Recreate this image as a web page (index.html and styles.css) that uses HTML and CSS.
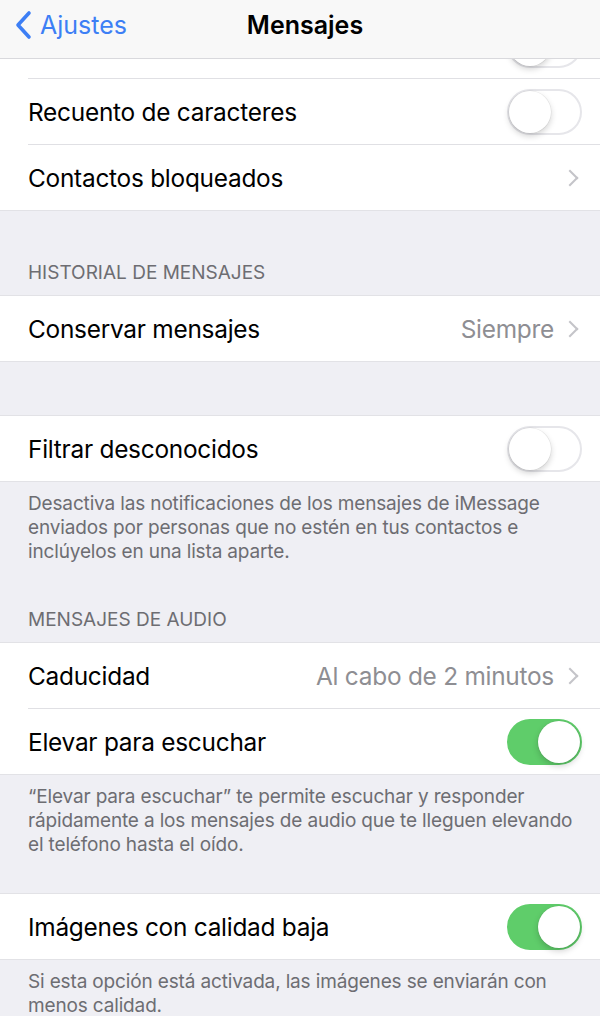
FILE: index.html
```html
<!DOCTYPE html>
<html lang="es">
<head>
<meta charset="utf-8">
<title>Mensajes</title>
<link rel="stylesheet" href="styles.css">
</head>
<body>
<header class="nav">
  <a class="back">
    <svg class="back-chev" width="20" height="30" viewBox="0 0 20 30"><polyline points="15,3 4,15 15,27" fill="none" stroke="#3d7ff5" stroke-width="3.6" stroke-linecap="round" stroke-linejoin="round"/></svg>
    <span>Ajustes</span>
  </a>
  <h1 class="title">Mensajes</h1>
  <span class="nav-end"></span>
</header>

<main class="page">
  <section class="group">
    <div class="row clipped"><span class="label"></span><span class="toggle"></span></div>
    <div class="row"><span class="label">Recuento de caracteres</span><span class="toggle"></span></div>
    <div class="row"><span class="label">Contactos bloqueados</span><span class="chev"></span></div>
  </section>

  <h2 class="header h-first">HISTORIAL DE MENSAJES</h2>
  <section class="group">
    <div class="row"><span class="label">Conservar mensajes</span><span class="value">Siempre</span><span class="chev"></span></div>
  </section>

  <div class="spacer"></div>
  <section class="group">
    <div class="row"><span class="label">Filtrar desconocidos</span><span class="toggle"></span></div>
  </section>
  <p class="footer">Desactiva las notificaciones de los mensajes de iMessage enviados por personas que no estén en tus contactos e inclúyelos en una lista aparte.</p>

  <h2 class="header h-after">MENSAJES DE AUDIO</h2>
  <section class="group">
    <div class="row"><span class="label">Caducidad</span><span class="value">Al cabo de 2 minutos</span><span class="chev"></span></div>
    <div class="row"><span class="label">Elevar para escuchar</span><span class="toggle on"></span></div>
  </section>
  <p class="footer">“Elevar para escuchar” te permite escuchar y responder rápidamente a los mensajes de audio que te lleguen elevando el teléfono hasta el oído.</p>

  <div class="spacer2"></div>
  <section class="group">
    <div class="row"><span class="label">Imágenes con calidad baja</span><span class="toggle on"></span></div>
  </section>
  <p class="footer">Si esta opción está activada, las imágenes se enviarán con menos calidad.</p>
</main>
</body>
</html>
```

FILE: styles.css
```css
* { box-sizing: border-box; }
html, body {
  margin: 0;
  padding: 0;
  background: #efeff4;
  font-family: "Inter", "Liberation Sans", sans-serif;
  -webkit-font-smoothing: antialiased;
}
body { width: 600px; height: 1016px; overflow: hidden; }

.nav {
  height: 59px;
  background: #f8f8f8;
  border-bottom: 1px solid #d9d9dd;
  display: grid;
  grid-template-columns: 1fr auto 1fr;
  align-items: start;
  padding-top: 9px;
}
.back {
  display: flex;
  align-items: center;
  gap: 6px;
  padding-left: 14px;
  color: #3d7ff5;
  font-size: 25px;
  line-height: 32px;
}
.back-chev { display: block; }
.title {
  margin: 0;
  font-size: 25px;
  font-weight: 600;
  color: #000;
  line-height: 32px;
  padding-left: 10px;
}

.group {
  background: #fff;
  border-top: 1px solid #e2e2e6;
  border-bottom: 1px solid #e2e2e6;
  margin: 0;
}
.group:first-child { border-top: none; }
.row {
  height: 66px;
  margin-left: 28px;
  padding-right: 18px;
  display: flex;
  align-items: center;
  border-bottom: 1px solid #e0e0e4;
}
.row:last-child { border-bottom: none; height: 65px; }
.row.clipped {
  height: 20px;
  overflow: hidden;
  align-items: flex-end;
}
.row.clipped .toggle { margin-bottom: 10px; }
.label {
  flex: 1;
  font-size: 24.4px;
  color: #000;
  letter-spacing: -0.25px;
}
.value {
  font-size: 24.4px;
  color: #8e8e93;
  margin-right: 10px;
  letter-spacing: -0.25px;
}
.chev {
  width: 12px;
  height: 12px;
  border-top: 2.5px solid #c4c4c9;
  border-right: 2.5px solid #c4c4c9;
  transform: rotate(45deg);
  margin-right: 6px;
}

.toggle {
  width: 75px;
  height: 46px;
  border-radius: 23px;
  border: 2px solid #e6e6ea;
  background: #fff;
  position: relative;
  flex: none;
}
.toggle::after {
  content: "";
  position: absolute;
  top: 0; left: 0;
  width: 42px;
  height: 42px;
  border-radius: 50%;
  background: #fff;
  box-shadow: 0 3px 6px rgba(0,0,0,0.18), 0 0 0 0.5px rgba(0,0,0,0.08);
}
.toggle.on {
  background: #5fcd6a;
  border-color: #5fcd6a;
}
.toggle.on::after { left: 29px; }

.header {
  margin: 0;
  padding: 0 28px 10px;
  font-size: 19px;
  font-weight: 400;
  line-height: 24px;
  color: #6d6d72;
}
.h-first { padding-top: 50px; }
.h-after { padding-top: 32px; }

.spacer { height: 53px; }
.spacer2 { height: 24px; }

.footer {
  margin: 0;
  padding: 10px 16px 12px 28px;
  font-size: 19px;
  line-height: 24px;
  color: #6d6d72;
  letter-spacing: -0.15px;
}
```
